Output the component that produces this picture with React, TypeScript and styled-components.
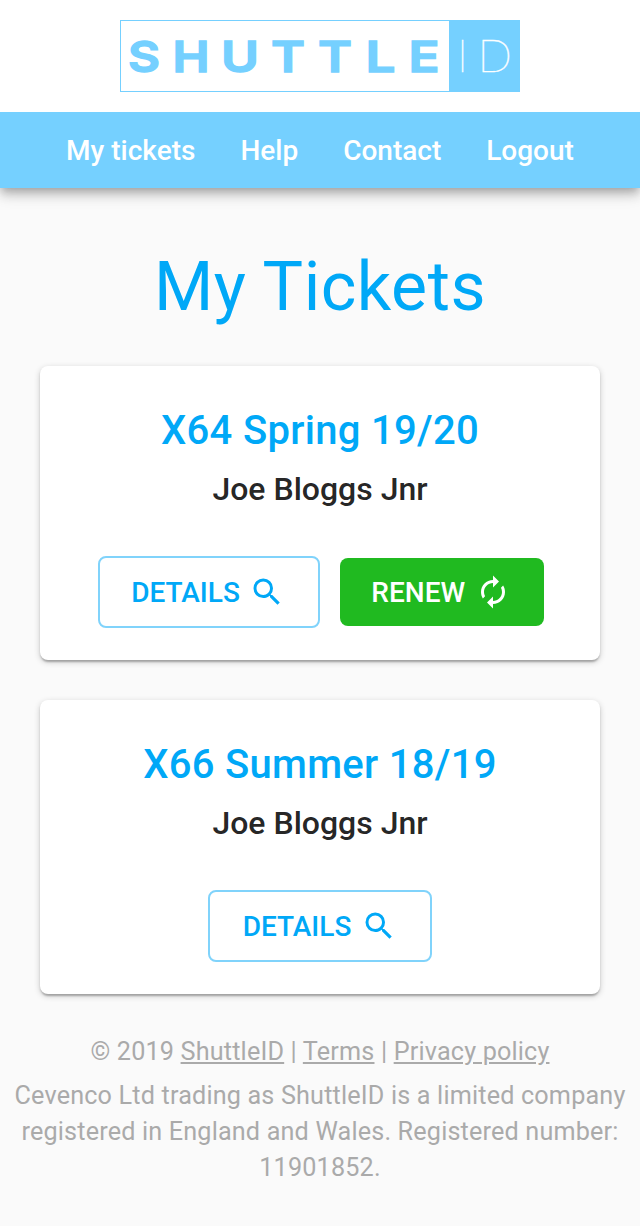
import React from "react";
import styled, { createGlobalStyle } from "styled-components";
import { MdAutorenew, MdSearch } from "react-icons/md";

const GlobalStyle = createGlobalStyle`
  *, *::before, *::after { box-sizing: border-box; }
  body {
    margin: 0;
    background: #fafafa;
    color: rgba(0, 0, 0, 0.87);
    font-family: Roboto, "Liberation Sans", sans-serif;
    -webkit-font-smoothing: antialiased;
  }
`;

const Page = styled.div`
  min-height: 1226px;
`;

const LogoBar = styled.header`
  position: relative;
  z-index: 1;
  display: flex;
  justify-content: center;
  padding: 20px 0;
  background: #fff;
`;

const Logo = styled.svg`
  display: block;
  width: 400px;
  height: 72px;
  font-family: Inter, "Liberation Sans", sans-serif;
`;

const NavBar = styled.nav`
  display: flex;
  justify-content: center;
  gap: 45px;
  height: 76px;
  align-items: center;
  padding-top: 2px;
  background: #75d0ff;
  box-shadow:
    0 4px 8px -2px rgba(0, 0, 0, 0.2),
    0 8px 10px 0 rgba(0, 0, 0, 0.14),
    0 2px 20px 0 rgba(0, 0, 0, 0.12);
`;

const NavLink = styled.a`
  color: #fff;
  font-size: 28px;
  font-weight: 500;
  line-height: 40px;
`;

const Main = styled.main`
  display: flex;
  flex-direction: column;
  gap: 40px;
  padding: 57px 40px 0;
`;

const Title = styled.h1`
  margin: 0 0 -3px;
  color: #00a8f7;
  font-size: 68px;
  font-weight: 400;
  line-height: 84px;
  letter-spacing: 0.5px;
  text-align: center;
`;

const Card = styled.section`
  display: flex;
  flex-direction: column;
  align-items: center;
  height: 294px;
  padding-top: 33px;
  border-radius: 8px;
  background: #fff;
  box-shadow:
    0 2px 6px 0 rgba(0, 0, 0, 0.2),
    0 2px 2px 0 rgba(0, 0, 0, 0.14),
    0 4px 2px -2px rgba(0, 0, 0, 0.12);
`;

const TicketName = styled.h2`
  margin: 0;
  color: #00a8f7;
  font-size: 40px;
  font-weight: 500;
  line-height: 64px;
  letter-spacing: 0.3px;
`;

const Passenger = styled.p`
  margin: 0;
  font-size: 32px;
  font-weight: 500;
  line-height: 52px;
`;

const Actions = styled.div<{ $paired: boolean }>`
  display: flex;
  align-items: center;
  gap: 20px;
  margin-top: 41px;
  padding-left: ${(p) => (p.$paired ? 2 : 0)}px;
`;

const Button = styled.button<{ $primary?: boolean; $width: number }>`
  display: flex;
  align-items: center;
  justify-content: center;
  gap: ${(p) => (p.$primary ? 10 : 9.5)}px;
  width: ${(p) => p.$width}px;
  height: ${(p) => (p.$primary ? 68 : 72)}px;
  padding: 0 ${(p) => (p.$width === 224 ? 0.5 : 1.5)}px 0 0;
  border: ${(p) => (p.$primary ? "0" : "2px solid #80d3fb")};
  border-radius: 8px;
  background: ${(p) => (p.$primary ? "#20ba20" : "transparent")};
  color: ${(p) => (p.$primary ? "#fff" : "#00a8f7")};
  font-family: inherit;
  font-size: 28px;
  font-weight: 500;
  line-height: 48px;

  svg {
    flex: none;
    width: 36px;
    height: 36px;
  }
`;

const ButtonLabel = styled.span`
  padding-top: 2px;
`;

const Footer = styled.footer`
  padding: 40px 10px 0;
  color: #aaa;
  font-size: 25.2px;
  line-height: 36px;
  letter-spacing: 0.17px;
  text-align: center;

  p {
    margin: 0 0 8px;
  }
`;

const FooterLink = styled.a`
  text-decoration: underline;
`;

type Letter = { char: string; x: number; width: number };

const boldLetters: Letter[] = [
  { char: "S", x: 8, width: 32 },
  { char: "H", x: 52.5, width: 37 },
  { char: "U", x: 101, width: 38 },
  { char: "T", x: 151, width: 34 },
  { char: "T", x: 198, width: 34 },
  { char: "L", x: 245.5, width: 30 },
  { char: "E", x: 288.5, width: 31 },
];

const thinLetters: Letter[] = [
  { char: "I", x: 337, width: 11 },
  { char: "D", x: 357, width: 35.5 },
];

const renderLetter = ({ char, x, width }: Letter) => (
  <text key={x} x={x} y={52} textLength={width} lengthAdjust="spacingAndGlyphs">
    {char}
  </text>
);

const ShuttleLogo = () => (
  <Logo viewBox="0 0 400 72" role="img" aria-label="ShuttleID">
    <rect x="0.5" y="0.5" width="399" height="71" fill="#fff" stroke="#75d0ff" />
    <rect x="329" width="71" height="72" fill="#75d0ff" />
    <g fill="#75d0ff" stroke="#75d0ff" strokeWidth="1.4" fontSize="43" fontWeight="600">
      {boldLetters.map(renderLetter)}
    </g>
    <g fill="#fff" stroke="#fff" strokeWidth="0.3" fontSize="43.5" fontWeight="100">
      {thinLetters.map(renderLetter)}
    </g>
  </Logo>
);

const navItems = ["My tickets", "Help", "Contact", "Logout"];

const tickets = [
  { name: "X64 Spring 19/20", passenger: "Joe Bloggs Jnr", renewable: true },
  { name: "X66 Summer 18/19", passenger: "Joe Bloggs Jnr", renewable: false },
];

export default function App() {
  return (
    <Page>
      <GlobalStyle />
      <LogoBar>
        <ShuttleLogo />
      </LogoBar>
      <NavBar>
        {navItems.map((item) => (
          <NavLink key={item}>{item}</NavLink>
        ))}
      </NavBar>
      <Main>
        <Title>My Tickets</Title>
        {tickets.map((ticket) => (
          <Card key={ticket.name}>
            <TicketName>{ticket.name}</TicketName>
            <Passenger>{ticket.passenger}</Passenger>
            <Actions $paired={ticket.renewable}>
              <Button $width={ticket.renewable ? 222 : 224}>
                <ButtonLabel>DETAILS</ButtonLabel>
                <MdSearch />
              </Button>
              {ticket.renewable && (
                <Button $primary $width={204}>
                  <ButtonLabel>RENEW</ButtonLabel>
                  <MdAutorenew />
                </Button>
              )}
            </Actions>
          </Card>
        ))}
      </Main>
      <Footer>
        <p>
          © 2019 <FooterLink>ShuttleID</FooterLink> | <FooterLink>Terms</FooterLink> |{" "}
          <FooterLink>Privacy policy</FooterLink>
        </p>
        <p>
          Cevenco Ltd trading as ShuttleID is a limited company registered in England and Wales.
          Registered number: 11901852.
        </p>
      </Footer>
    </Page>
  );
}
